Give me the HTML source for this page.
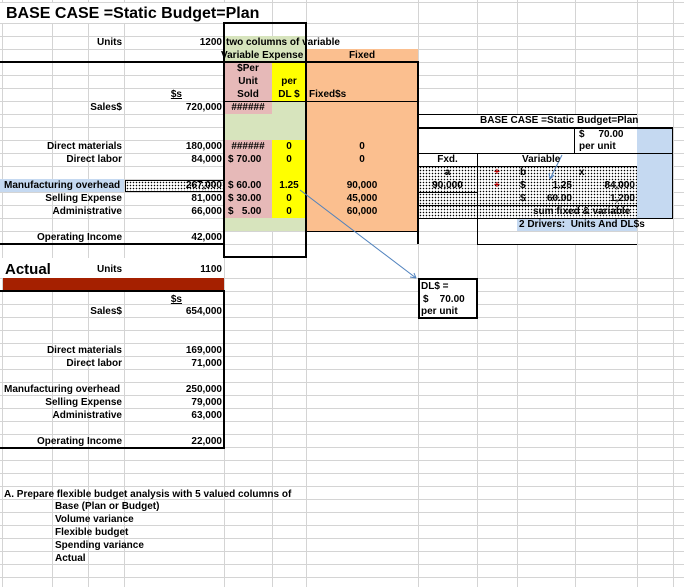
<!DOCTYPE html>
<html><head><meta charset="utf-8"><style>
*{margin:0;padding:0;box-sizing:border-box}
body{width:684px;height:587px;overflow:hidden;background:#fff;position:relative;font-family:"Liberation Sans",Arial,sans-serif;font-size:10px;font-weight:bold;color:#000}
.a{position:absolute}
.f{position:absolute}
.t{position:absolute;white-space:nowrap;line-height:13px;height:13px}
.r{text-align:right}
.c{text-align:center}
.v{position:absolute;width:1px;background:#d4d4d4}
.k{position:absolute;background:#000}
.dot{background-color:#fff;background-image:radial-gradient(#000 0.6px,transparent 0.9px);background-size:3px 3px}
</style></head><body>
<!-- grid horizontal -->
<div class="a" style="left:0;top:23px;width:684px;height:234px;background:repeating-linear-gradient(to bottom,#d4d4d4 0 1px,transparent 1px 13px)"></div>
<div class="a" style="left:0;top:2px;width:684px;height:1px;background:#d4d4d4"></div>
<div class="a" style="left:0;top:278px;width:684px;height:309px;background:repeating-linear-gradient(to bottom,#d4d4d4 0 1px,transparent 1px 13px)"></div>
<!-- grid vertical -->
<div class="v" style="left:2px;top:0;height:587px"></div>
<div class="v" style="left:52px;top:0;height:587px"></div>
<div class="v" style="left:88px;top:0;height:587px"></div>
<div class="v" style="left:124px;top:0;height:587px"></div>
<div class="v" style="left:224px;top:0;height:587px"></div>
<div class="v" style="left:272px;top:0;height:587px"></div>
<div class="v" style="left:306px;top:0;height:587px"></div>
<div class="v" style="left:418px;top:0;height:587px"></div>
<div class="v" style="left:477px;top:0;height:587px"></div>
<div class="v" style="left:517px;top:0;height:587px"></div>
<div class="v" style="left:575px;top:0;height:587px"></div>
<div class="v" style="left:637px;top:0;height:587px"></div>
<div class="v" style="left:673px;top:0;height:587px"></div>

<!-- fills -->
<div class="f" style="left:0;top:3px;width:270px;height:20px;background:#fff"></div>
<div class="f" style="left:0;top:258px;width:224px;height:20px;background:#fff"></div>
<div class="f" style="left:224px;top:36px;width:82px;height:26px;background:#d7e4bd"></div>
<div class="f" style="left:306px;top:49px;width:112px;height:182px;background:#fbbf8f"></div>
<div class="f" style="left:224px;top:62px;width:48px;height:52px;background:#e6b9b8"></div>
<div class="f" style="left:272px;top:62px;width:34px;height:39px;background:#ffff00"></div>
<div class="f" style="left:272px;top:101px;width:34px;height:39px;background:#d7e4bd"></div>
<div class="f" style="left:224px;top:114px;width:48px;height:26px;background:#d7e4bd"></div>
<div class="f" style="left:224px;top:140px;width:48px;height:78px;background:#e6b9b8"></div>
<div class="f" style="left:272px;top:140px;width:34px;height:78px;background:#ffff00"></div>
<div class="f" style="left:224px;top:218px;width:82px;height:13px;background:#d7e4bd"></div>
<div class="f" style="left:0;top:179px;width:124px;height:13px;background:#c5d9f1"></div>
<div class="f dot" style="left:125px;top:180px;width:99px;height:12px;border:1.5px solid #000"></div>
<div class="f" style="left:3px;top:278px;width:221px;height:13px;background:#a52000"></div>
<!-- right table fills -->
<div class="f" style="left:419px;top:115px;width:218px;height:116px;background:#fff"></div>
<div class="f" style="left:637px;top:128px;width:36px;height:90px;background:#c5d9f1"></div>
<div class="f" style="left:517px;top:218px;width:120px;height:13px;background:#c5d9f1"></div>
<div class="f dot" style="left:419px;top:166px;width:218px;height:52px"></div>
<div class="f" style="left:477px;top:232px;width:160px;height:13px;background:#fff"></div>
<div class="f" style="left:419px;top:279px;width:58px;height:39px;background:#fff"></div>

<!-- thick borders -->
<div class="k" style="left:223px;top:22px;width:84px;height:2px"></div>
<div class="k" style="left:223px;top:22px;width:2px;height:235px"></div>
<div class="k" style="left:305px;top:22px;width:2px;height:235px"></div>
<div class="k" style="left:223px;top:256px;width:84px;height:2px"></div>
<div class="k" style="left:0;top:61px;width:419px;height:2px"></div>
<div class="k" style="left:224px;top:101px;width:194px;height:1px"></div>
<div class="k" style="left:417px;top:61px;width:2px;height:183px"></div>
<div class="k" style="left:0;top:243px;width:224px;height:2px"></div>
<div class="k" style="left:306px;top:231px;width:112px;height:1px"></div>
<div class="k" style="left:0;top:290px;width:224px;height:2px"></div>
<div class="k" style="left:223px;top:290px;width:2px;height:159px"></div>
<div class="k" style="left:0;top:447px;width:225px;height:2px"></div>
<!-- right table borders -->
<div class="k" style="left:418px;top:114px;width:219px;height:1px"></div>
<div class="k" style="left:418px;top:127px;width:255px;height:2px"></div>
<div class="k" style="left:574px;top:127px;width:1px;height:26px"></div>
<div class="k" style="left:418px;top:153px;width:255px;height:1px"></div>
<div class="k" style="left:418px;top:166px;width:219px;height:1px"></div>
<div class="k" style="left:477px;top:153px;width:1px;height:92px"></div>
<div class="k" style="left:418px;top:192px;width:59px;height:1px"></div>
<div class="k" style="left:418px;top:205px;width:219px;height:1px"></div>
<div class="k" style="left:418px;top:218px;width:255px;height:1px"></div>
<div class="k" style="left:477px;top:244px;width:160px;height:1px"></div>
<div class="k" style="left:672px;top:127px;width:1px;height:92px"></div>
<div class="a" style="left:418px;top:278px;width:60px;height:41px;border:2px solid #000"></div>

<!-- arrows -->
<svg class="a" style="left:0;top:0" width="684" height="587">
<line x1="300" y1="190" x2="416" y2="278" stroke="#4f81bd" stroke-width="1"/>
<path d="M416 278 l-6 -1 m6 1 l-2 -5" stroke="#4f81bd" fill="none"/>
<line x1="562" y1="155" x2="550" y2="179" stroke="#4f81bd" stroke-width="1"/>
<path d="M550 179 l-1 -6 m1 6 l4 -4" stroke="#4f81bd" fill="none"/>
</svg>

<!-- text top -->
<div class="t" style="left:6px;top:5px;font-size:16px;line-height:18px;height:18px">BASE CASE =Static Budget=Plan</div>
<div class="t r" style="left:52px;top:36px;width:70px">Units</div>
<div class="t r" style="left:124px;top:36px;width:98px">1200</div>
<div class="t" style="left:226px;top:36px;font-weight:bold">two columns of variable</div>
<div class="t" style="left:221px;top:49px;width:86px;overflow:hidden">Variable Expense</div>
<div class="t c" style="left:306px;top:49px;width:112px">Fixed</div>
<div class="t c" style="left:224px;top:62px;width:48px">$Per</div>
<div class="t c" style="left:224px;top:75px;width:48px">Unit</div>
<div class="t c" style="left:224px;top:88px;width:48px">Sold</div>
<div class="t c" style="left:272px;top:75px;width:34px">per</div>
<div class="t c" style="left:272px;top:88px;width:34px">DL $</div>
<div class="t" style="left:309px;top:88px">Fixed$s</div>
<div class="t r" style="left:124px;top:88px;width:58px;text-decoration:underline">$s</div>
<div class="t r" style="left:52px;top:101px;width:70px">Sales$</div>
<div class="t r" style="left:124px;top:101px;width:98px">720,000</div>
<div class="t c" style="left:224px;top:101px;width:48px">######</div>
<div class="t r" style="left:0;top:140px;width:122px">Direct materials</div>
<div class="t r" style="left:124px;top:140px;width:98px">180,000</div>
<div class="t c" style="left:224px;top:140px;width:48px">######</div>
<div class="t c" style="left:272px;top:140px;width:34px">0</div>
<div class="t c" style="left:306px;top:140px;width:112px">0</div>
<div class="t r" style="left:0;top:153px;width:122px">Direct labor</div>
<div class="t r" style="left:124px;top:153px;width:98px">84,000</div>
<div class="t" style="left:228px;top:153px">$ 70.00</div>
<div class="t c" style="left:272px;top:153px;width:34px">0</div>
<div class="t c" style="left:306px;top:153px;width:112px">0</div>
<div class="t" style="left:4px;top:179px">Manufacturing overhead</div>
<div class="t r" style="left:124px;top:179px;width:98px">267,000</div>
<div class="t" style="left:228px;top:179px">$ 60.00</div>
<div class="t c" style="left:272px;top:179px;width:34px">1.25</div>
<div class="t c" style="left:306px;top:179px;width:112px">90,000</div>
<div class="t r" style="left:0;top:192px;width:122px">Selling Expense</div>
<div class="t r" style="left:124px;top:192px;width:98px">81,000</div>
<div class="t" style="left:228px;top:192px">$ 30.00</div>
<div class="t c" style="left:272px;top:192px;width:34px">0</div>
<div class="t c" style="left:306px;top:192px;width:112px">45,000</div>
<div class="t r" style="left:0;top:205px;width:122px">Administrative</div>
<div class="t r" style="left:124px;top:205px;width:98px">66,000</div>
<div class="t" style="left:228px;top:205px">$&nbsp;&nbsp; 5.00</div>
<div class="t c" style="left:272px;top:205px;width:34px">0</div>
<div class="t c" style="left:306px;top:205px;width:112px">60,000</div>
<div class="t r" style="left:0;top:231px;width:122px">Operating Income</div>
<div class="t r" style="left:124px;top:231px;width:98px">42,000</div>

<!-- right table text -->
<div class="t" style="left:480px;top:114px">BASE CASE =Static Budget=Plan</div>
<div class="t" style="left:579px;top:128px">$&nbsp;&nbsp;&nbsp;&nbsp; 70.00</div>
<div class="t" style="left:579px;top:140px">per unit</div>
<div class="t c" style="left:418px;top:153px;width:59px">Fxd.</div>
<div class="t" style="left:522px;top:153px">Variable</div>
<div class="t c" style="left:418px;top:166px;width:59px">a</div>
<div class="t c" style="left:418px;top:179px;width:59px">90,000</div>
<div class="t" style="left:494px;top:166px;color:#c00000">+</div>
<div class="t" style="left:494px;top:179px;color:#c00000">+</div>
<div class="t" style="left:520px;top:166px">b</div>
<div class="t" style="left:579px;top:166px">x</div>
<div class="t" style="left:520px;top:179px">$</div>
<div class="t r" style="left:520px;top:179px;width:52px">1.25</div>
<div class="t r" style="left:575px;top:179px;width:60px">84,000</div>
<div class="t" style="left:520px;top:192px">$</div>
<div class="t r" style="left:520px;top:192px;width:52px">60.00</div>
<div class="t r" style="left:575px;top:192px;width:60px">1,200</div>
<div class="t" style="left:533px;top:205px">sum fixed &amp; variable</div>
<div class="t" style="left:519px;top:218px">2 Drivers:&nbsp; Units And DL$s</div>
<div class="t" style="left:421px;top:280px">DL$ =</div>
<div class="t" style="left:423px;top:293px">$&nbsp;&nbsp;&nbsp; 70.00</div>
<div class="t" style="left:421px;top:305px">per unit</div>

<!-- actual -->
<div class="t" style="left:5px;top:261px;font-size:15px;line-height:17px;height:17px">Actual</div>
<div class="t r" style="left:52px;top:263px;width:70px">Units</div>
<div class="t r" style="left:124px;top:263px;width:98px">1100</div>
<div class="t r" style="left:124px;top:293px;width:58px;text-decoration:underline">$s</div>
<div class="t r" style="left:52px;top:305px;width:70px">Sales$</div>
<div class="t r" style="left:124px;top:305px;width:98px">654,000</div>
<div class="t r" style="left:0;top:344px;width:122px">Direct materials</div>
<div class="t r" style="left:124px;top:344px;width:98px">169,000</div>
<div class="t r" style="left:0;top:357px;width:122px">Direct labor</div>
<div class="t r" style="left:124px;top:357px;width:98px">71,000</div>
<div class="t" style="left:4px;top:383px">Manufacturing overhead</div>
<div class="t r" style="left:124px;top:383px;width:98px">250,000</div>
<div class="t r" style="left:0;top:396px;width:122px">Selling Expense</div>
<div class="t r" style="left:124px;top:396px;width:98px">79,000</div>
<div class="t r" style="left:0;top:409px;width:122px">Administrative</div>
<div class="t r" style="left:124px;top:409px;width:98px">63,000</div>
<div class="t r" style="left:0;top:435px;width:122px">Operating Income</div>
<div class="t r" style="left:124px;top:435px;width:98px">22,000</div>

<div class="t" style="left:4px;top:488px">A. Prepare flexible budget analysis with 5 valued columns of</div>
<div class="t" style="left:55px;top:500px">Base (Plan or Budget)</div>
<div class="t" style="left:55px;top:513px">Volume variance</div>
<div class="t" style="left:55px;top:526px">Flexible budget</div>
<div class="t" style="left:55px;top:539px">Spending variance</div>
<div class="t" style="left:55px;top:552px">Actual</div>
</body></html>
